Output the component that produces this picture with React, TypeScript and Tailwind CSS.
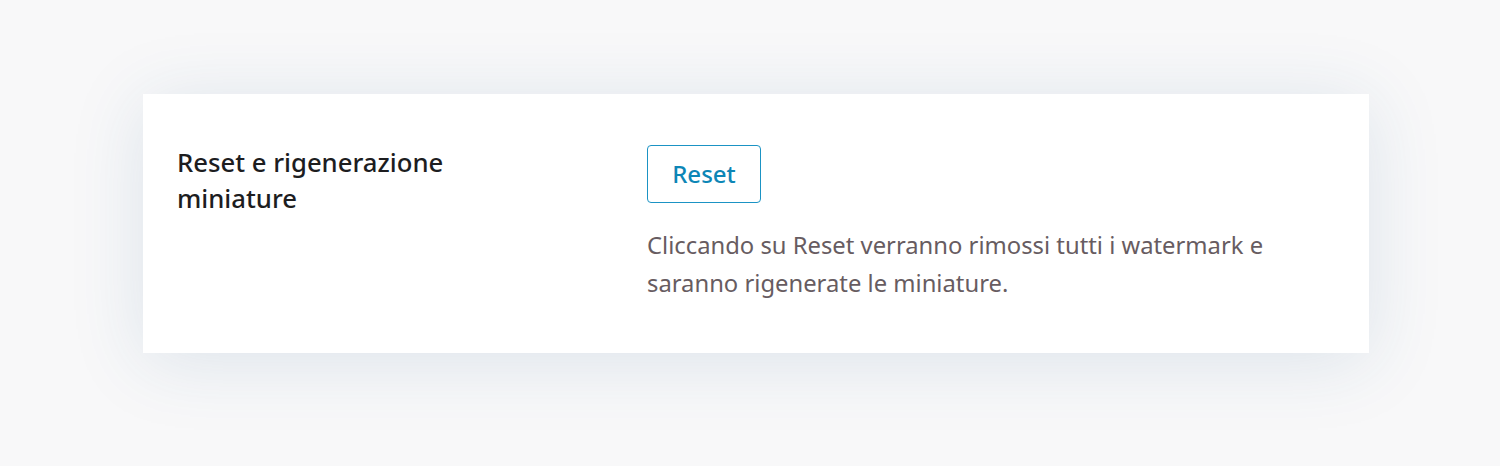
import React from "react";

export default function App() {
  return (
    <div
      className="w-[1500px] h-[466px] bg-[#f8f8f9] pt-[94px] pl-[143px]"
      style={{ fontFamily: '"Noto Sans", "Open Sans", sans-serif' }}
    >
      <div className="w-[1226px] h-[259px] bg-white shadow-[0_8px_70px_rgba(40,90,140,0.13)] flex pl-[34px] pt-[51px]">
        <div className="w-[470px] shrink-0">
          <h2 className="text-[25.7px] leading-[36px] font-medium text-[#1d1d1f] w-[320px]">
            Reset e rigenerazione miniature
          </h2>
        </div>
        <div className="flex flex-col items-start">
          <button className="w-[114px] h-[58px] border border-[#1b93c4] rounded-[4px] text-[#0d86b6] text-[24px] font-medium bg-white">
            Reset
          </button>
          <p className="mt-[23px] w-[660px] text-[23.8px] leading-[38px] text-[#675c61]">
            Cliccando su Reset verranno rimossi tutti i watermark e saranno
            rigenerate le miniature.
          </p>
        </div>
      </div>
    </div>
  );
}
